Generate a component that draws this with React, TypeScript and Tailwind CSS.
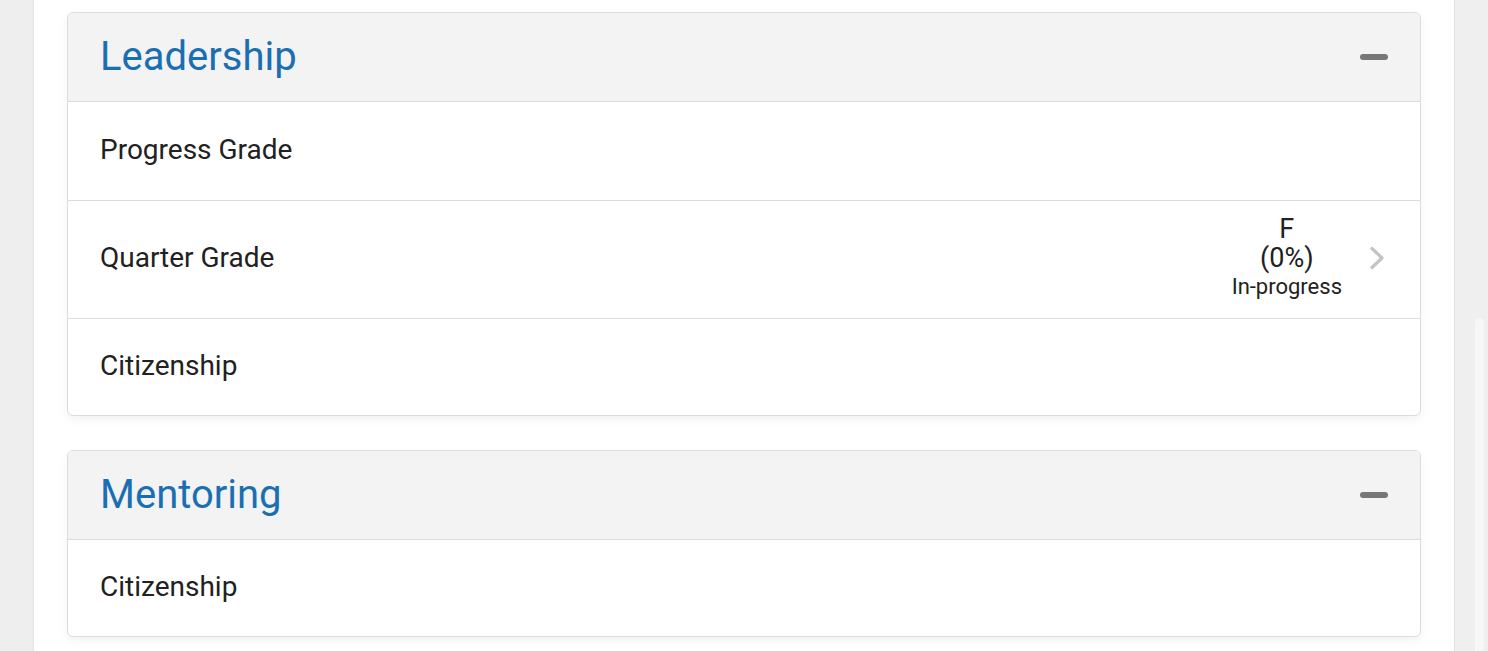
type Row = {
  label: string;
  grade?: string;
  percent?: string;
  status?: string;
  height: string;
};

const sections: { title: string; rows: Row[] }[] = [
  {
    title: "Leadership",
    rows: [
      { label: "Progress Grade", height: "h-[99px]" },
      {
        label: "Quarter Grade",
        grade: "F",
        percent: "(0%)",
        status: "In-progress",
        height: "h-[118px]",
      },
      { label: "Citizenship", height: "h-[96px]" },
    ],
  },
  {
    title: "Mentoring",
    rows: [{ label: "Citizenship", height: "h-[96px]" }],
  },
];

function Chevron() {
  return (
    <svg width="16" height="24" viewBox="0 0 16 24" fill="none" className="shrink-0">
      <polyline
        points="3,2.5 13,12 3,21.5"
        stroke="#c4c4c4"
        strokeWidth="3.2"
        strokeLinecap="round"
        strokeLinejoin="round"
      />
    </svg>
  );
}

function Section({ title, rows }: { title: string; rows: Row[] }) {
  return (
    <div className="rounded-[6px] border border-[#dcdcdc] bg-white overflow-hidden shadow-[0_4px_10px_rgba(0,0,0,0.05)]">
      <div className="h-[89px] bg-[#f3f3f3] border-b border-[#dcdcdc] flex items-center justify-between px-[32px]">
        <span className="text-[40px] leading-none text-[#1a6fb3]">{title}</span>
        <span className="block w-[28px] h-[6px] rounded-full bg-[#777777]" />
      </div>
      {rows.map((row, i) => (
        <div
          key={row.label + i}
          className={`${row.height} flex items-center justify-between pl-[32px] pr-[35px] pb-[3px] ${
            i < rows.length - 1 ? "border-b border-[#dcdcdc]" : ""
          }`}
        >
          <span className="text-[28px] text-[#212121]">{row.label}</span>
          {row.grade && (
            <div className="flex items-center gap-[27px]">
              <div className="flex flex-col items-center text-[#212121]">
                <span className="text-[27px] leading-[29px]">{row.grade}</span>
                <span className="text-[27px] leading-[29px]">{row.percent}</span>
                <span className="text-[22px] leading-[28px]">{row.status}</span>
              </div>
              <Chevron />
            </div>
          )}
        </div>
      ))}
    </div>
  );
}

export default function App() {
  return (
    <div className="h-[651px] overflow-hidden flex bg-[#eeeeee] font-['Roboto',sans-serif]">
      <div className="w-[34px] shrink-0 bg-[#eeeeee] border-r border-[#e2e2e2]" />
      <div className="flex-1 bg-white flex flex-col gap-[34px] px-[33px] pt-[12px]">
        {sections.map((s) => (
          <Section key={s.title} title={s.title} rows={s.rows} />
        ))}
      </div>
      <div className="w-[34px] shrink-0 bg-[#efefef] border-l border-[#e2e2e2] flex justify-end pr-[4px]">
        <div className="mt-[318px] w-[9px] h-[400px] rounded-full bg-[#f7f7f7]" />
      </div>
    </div>
  );
}
